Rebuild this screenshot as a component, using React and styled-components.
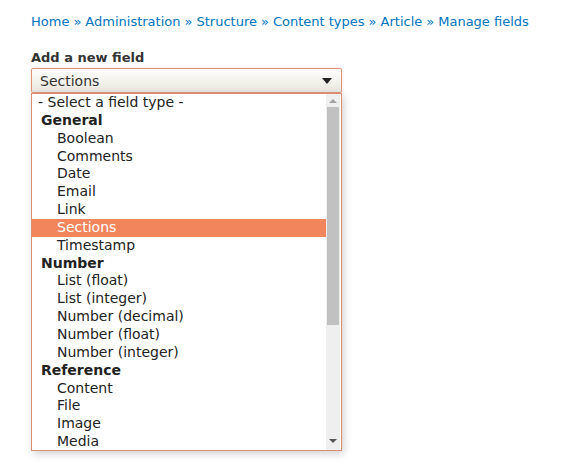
import React from 'react';
import styled, { createGlobalStyle } from 'styled-components';

const GlobalStyle = createGlobalStyle`
    body {
        margin: 0;
        background: #fff;
        font-family: 'DejaVu Sans', Verdana, sans-serif;
        color: #222;
    }
`

const Page = styled.div`
    padding: 13px 31px 20px;
    width: 566px;
    height: 476px;
    box-sizing: border-box;
`

const Crumbs = styled.nav`
    font-size: 13px;
    line-height: 18px;
    color: #0074bd;
    white-space: nowrap;

    a {
        color: #0074bd;
        text-decoration: none;
    }
    span {
        margin: 0 4px;
    }
`

const Field = styled.div`
    margin-top: 19px;
    position: relative;
    width: 311px;
`

const Label = styled.label`
    display: block;
    font-size: 13px;
    font-weight: 700;
    line-height: 16px;
    color: #333;
    margin-bottom: 2px;
`

const SelectBox = styled.div`
    height: 25px;
    box-sizing: border-box;
    border: 1px solid #e0967c;
    border-radius: 2px;
    background: linear-gradient(180deg, #fefefd 0%, #f3f2ec 55%, #e7e6dd 100%);
    box-shadow: 0 0 2px rgba(224, 150, 124, 0.5);
    display: flex;
    align-items: center;
    justify-content: space-between;
    padding: 0 8px 0 8px;
    font-size: 14px;
    color: #333;
`

const Caret = styled.span`
    width: 0;
    height: 0;
    border-left: 5px solid transparent;
    border-right: 5px solid transparent;
    border-top: 6px solid #222;
    margin-right: 1px;
`

const Popup = styled.div`
    position: absolute;
    left: 0;
    top: 43px;
    width: 311px;
    height: 358px;
    box-sizing: border-box;
    border: 1px solid #d98d74;
    background: #fff;
    box-shadow: 2px 3px 8px rgba(0, 0, 0, 0.18);
    display: flex;
    overflow: hidden;
`

const List = styled.ul`
    list-style: none;
    margin: 0;
    padding: 0;
    flex: 1;
`

const Row = styled.li`
    height: 17.85px;
    line-height: 17.85px;
    font-size: 14px;
    white-space: nowrap;
    padding-left: ${p => (p.$group ? '9px' : p.$option ? '25px' : '6px')};
    font-weight: ${p => (p.$group ? 700 : 400)};
    color: ${p => (p.$active ? '#fff' : '#222')};
    background: ${p => (p.$active ? '#f2855c' : 'transparent')};
`

const Scrollbar = styled.div`
    width: 14px;
    background: #efefef;
    display: flex;
    flex-direction: column;
    align-items: center;
    margin-right: 1px;
`

const Arrow = styled.span`
    width: 0;
    height: 0;
    border-left: 4px solid transparent;
    border-right: 4px solid transparent;
    ${p => (p.$down ? 'border-top: 4px solid #555;' : 'border-bottom: 4px solid #a3a3a3;')}
    margin: ${p => (p.$down ? 'auto 0 7px' : '5px 0 4px')};
`

const Thumb = styled.div`
    width: 12px;
    height: 218px;
    background: #c1c1c1;
`

const options = [
    { label: '- Select a field type -' },
    { label: 'General', group: true },
    { label: 'Boolean' },
    { label: 'Comments' },
    { label: 'Date' },
    { label: 'Email' },
    { label: 'Link' },
    { label: 'Sections', active: true },
    { label: 'Timestamp' },
    { label: 'Number', group: true },
    { label: 'List (float)' },
    { label: 'List (integer)' },
    { label: 'Number (decimal)' },
    { label: 'Number (float)' },
    { label: 'Number (integer)' },
    { label: 'Reference', group: true },
    { label: 'Content' },
    { label: 'File' },
    { label: 'Image' },
    { label: 'Media' },
]

const crumbs = ['Home', 'Administration', 'Structure', 'Content types', 'Article', 'Manage fields']

const App = () => {
    return (
        <Page>
            <GlobalStyle />
            <Crumbs>
                {crumbs.map((c, i) => (
                    <React.Fragment key={c}>
                        {i > 0 && <span>»</span>}
                        <a href="#">{c}</a>
                    </React.Fragment>
                ))}
            </Crumbs>
            <Field>
                <Label>Add a new field</Label>
                <SelectBox>
                    Sections
                    <Caret />
                </SelectBox>
                <Popup>
                    <List>
                        {options.map((o, i) => (
                            <Row
                                key={i}
                                $group={o.group}
                                $option={!o.group && i > 0}
                                $active={o.active}
                            >
                                {o.label}
                            </Row>
                        ))}
                    </List>
                    <Scrollbar>
                        <Arrow />
                        <Thumb />
                        <Arrow $down />
                    </Scrollbar>
                </Popup>
            </Field>
        </Page>
    )
}

export default App;
